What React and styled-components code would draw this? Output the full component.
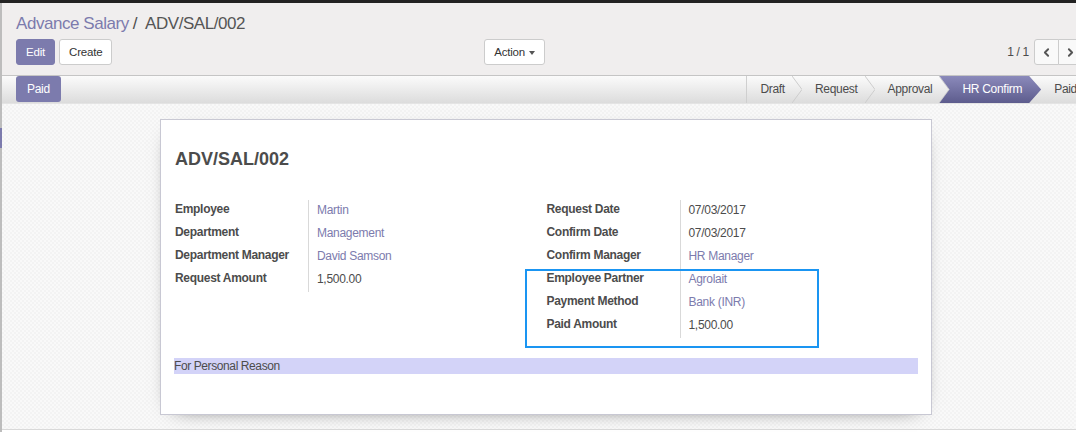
import styled, { createGlobalStyle } from 'styled-components';
import { ChevronLeft, ChevronRight } from 'lucide-react';

const GlobalStyle = createGlobalStyle`
  html, body { margin: 0; padding: 0; overflow: hidden; background: #fff; }
  body {
    font-family: "Liberation Sans", Arial, sans-serif;
    font-size: 12px;
    letter-spacing: -0.3px;
    color: #4c4c4c;
  }
  * { box-sizing: border-box; }
`;

const Frame = styled.div`
  width: 1090px;
  height: 432px;
  display: flex;
  border-top: 3px solid #222;
`;

const Rail = styled.div`
  width: 2px;
  flex: none;
  background: linear-gradient(to bottom, #bdbdbd 125px, #7c7bad 125px, #7c7bad 145px, #bdbdbd 145px);
`;

const Main = styled.div`
  flex: 1;
  display: flex;
  flex-direction: column;
  min-width: 0;
`;

const ControlPanel = styled.div`
  background: #f0eeee;
  padding: 8px 7px 10px 14px;
  border-bottom: 1px solid #c5c5c5;
`;

const Breadcrumb = styled.div`
  font-size: 17px;
  line-height: 25px;
  letter-spacing: -0.45px;
  color: #555;
  margin-bottom: 3px;
  a { color: #7c7bad; text-decoration: none; }
  span.sep { margin: 0 8px 0 4px; color: #4c4c4c; }
`;

const ButtonRow = styled.div`
  display: flex;
  align-items: center;
  height: 26px;
`;

const LeftButtons = styled.div`
  width: 529px;
  display: flex;
  gap: 4px;
  .push { margin-left: auto; }
`;

const Button = styled.button`
  height: 26px;
  padding: 0 9px;
  border-radius: 3px;
  font-family: inherit;
  font-size: 11.5px;
  letter-spacing: -0.2px;
  border: 1px solid ${p => (p.$primary ? '#7c7bad' : '#ccc')};
  background: ${p => (p.$primary ? '#7c7bad' : '#fff')};
  color: ${p => (p.$primary ? '#fff' : '#333')};
  display: inline-flex;
  align-items: center;
  gap: 4px;
`;

const Caret = styled.span`
  width: 0;
  height: 0;
  border-top: 4px solid #555;
  border-left: 3.5px solid transparent;
  border-right: 3.5px solid transparent;
  margin-top: 1px;
`;

const Pager = styled.div`
  margin-left: auto;
  display: flex;
  align-items: center;
  gap: 5px;
  color: #4c4c4c;
`;

const PagerGroup = styled.div`
  display: flex;
`;

const PagerButton = styled.button`
  width: 25px;
  height: 26px;
  padding: 0;
  display: flex;
  align-items: center;
  justify-content: center;
  background: #f9f9f9;
  color: #555;
  border: 1px solid #ccc;
  border-radius: ${p => (p.$first ? '3px 0 0 3px' : '0 3px 3px 0')};
  margin-left: ${p => (p.$first ? '0' : '-1px')};
`;

const StatusBar = styled.div`
  height: 28px;
  display: flex;
  padding-left: 14px;
  background: linear-gradient(to bottom, #fbfbfb, #dcdcdc);
  border-bottom: 1px solid #e4e4e4;
`;

const PaidButton = styled.button`
  height: 26px;
  padding: 0 11px;
  border: none;
  border-radius: 3px;
  background: #7c7bad;
  color: #fff;
  font-family: inherit;
  font-size: 12px;
  letter-spacing: -0.3px;
`;

const Steps = styled.div`
  margin-left: auto;
  display: flex;
  height: 27px;
  border-left: 1px solid #cfcfcf;
`;

const Step = styled.div`
  display: flex;
  align-items: center;
  line-height: 27px;
  white-space: nowrap;
  padding-left: 13px;
  padding-right: ${p => (p.$last ? '13px' : '0')};
  color: #4c4c4c;
  svg { margin-left: 7px; flex: none; }
`;

const ActiveStep = styled.div`
  display: flex;
  align-items: center;
  line-height: 27px;
  white-space: nowrap;
  margin-left: -10px;
  padding: 0 19px 0 23px;
  color: #fff;
  background: linear-gradient(to bottom, #8b8abb, #5d5c8d);
  clip-path: polygon(0 0, calc(100% - 12px) 0, 100% 50%, calc(100% - 12px) 100%, 0 100%, 10px 50%);
`;

const Content = styled.div`
  height: 326px;
  padding-top: 15px;
  background: repeating-conic-gradient(#f9f9f9 0% 25%, #f3f3f3 0% 50%) 0 0 / 4px 4px;
  border-bottom: 1px solid #d9d9d9;
`;

const Sheet = styled.div`
  width: 772px;
  margin: 0 auto;
  background: #fff;
  border: 1px solid #c8c8d3;
  box-shadow: 0 5px 20px -15px #000;
  padding: 28px 13px 40px 14px;
`;

const Title = styled.h1`
  margin: 0 0 30px;
  font-size: 18px;
  line-height: 22px;
  font-weight: bold;
  letter-spacing: 0;
  color: #4c4c4c;
`;

const Groups = styled.div`
  display: grid;
  grid-template-columns: 1fr 1fr;
  align-items: start;
`;

const Group = styled.div`
  position: relative;
  display: grid;
  grid-template-columns: 134px 1fr;
`;

const Label = styled.div`
  font-weight: bold;
  line-height: 18px;
  padding-bottom: 5px;
  border-right: 1px solid #d9d9d9;
  color: #4c4c4c;
`;

const Value = styled.div`
  line-height: 18px;
  padding: 1px 0 4px 8px;
  color: ${p => (p.$link ? '#7c7bad' : '#4c4c4c')};
`;

const Highlight = styled.div`
  position: absolute;
  top: 69px;
  left: -22px;
  width: 294px;
  height: 79px;
  border: 2px solid #1a95f2;
  pointer-events: none;
`;

const Note = styled.div`
  margin: 20px 0 0 -1px;
  height: 16px;
  line-height: 16px;
  background: #d3d3f8;
  font-size: 12px;
  letter-spacing: -0.4px;
  color: #4c4c4c;
`;

const Chevron = () => (
  <svg width="10" height="27" viewBox="0 0 10 27">
    <polyline points="0,0 10,13.5 0,27" fill="none" stroke="#cdcdcd" strokeWidth="1" />
  </svg>
);

const leftFields = [
  ['Employee', 'Martin', true],
  ['Department', 'Management', true],
  ['Department Manager', 'David Samson', true],
  ['Request Amount', '1,500.00', false],
];

const rightFields = [
  ['Request Date', '07/03/2017', false],
  ['Confirm Date', '07/03/2017', false],
  ['Confirm Manager', 'HR Manager', true],
  ['Employee Partner', 'Agrolait', true],
  ['Payment Method', 'Bank (INR)', true],
  ['Paid Amount', '1,500.00', false],
];

function Fields({ rows, children }) {
  return (
    <Group>
      {rows.flatMap(([label, value, link]) => [
        <Label key={label + '-l'}>{label}</Label>,
        <Value key={label + '-v'} $link={link}>{value}</Value>,
      ])}
      {children}
    </Group>
  );
}

export default function App() {
  return (
    <>
      <GlobalStyle />
      <Frame>
        <Rail />
        <Main>
          <ControlPanel>
            <Breadcrumb>
              <a href="#">Advance Salary</a>
              <span className="sep">/</span>
              ADV/SAL/002
            </Breadcrumb>
            <ButtonRow>
              <LeftButtons>
                <Button $primary>Edit</Button>
                <Button>Create</Button>
                <Button className="push">Action <Caret /></Button>
              </LeftButtons>
              <Pager>
                <span>1 / 1</span>
                <PagerGroup>
                  <PagerButton $first><ChevronLeft size={13} strokeWidth={3.5} /></PagerButton>
                  <PagerButton><ChevronRight size={13} strokeWidth={3.5} /></PagerButton>
                </PagerGroup>
              </Pager>
            </ButtonRow>
          </ControlPanel>

          <StatusBar>
            <PaidButton>Paid</PaidButton>
            <Steps>
              <Step>Draft<Chevron /></Step>
              <Step>Request<Chevron /></Step>
              <Step>Approval<Chevron /></Step>
              <ActiveStep>HR Confirm</ActiveStep>
              <Step $last>Paid</Step>
            </Steps>
          </StatusBar>

          <Content>
            <Sheet>
              <Title>ADV/SAL/002</Title>
              <Groups>
                <Fields rows={leftFields} />
                <Fields rows={rightFields}>
                  <Highlight />
                </Fields>
              </Groups>
              <Note>For Personal Reason</Note>
            </Sheet>
          </Content>
        </Main>
      </Frame>
    </>
  );
}
